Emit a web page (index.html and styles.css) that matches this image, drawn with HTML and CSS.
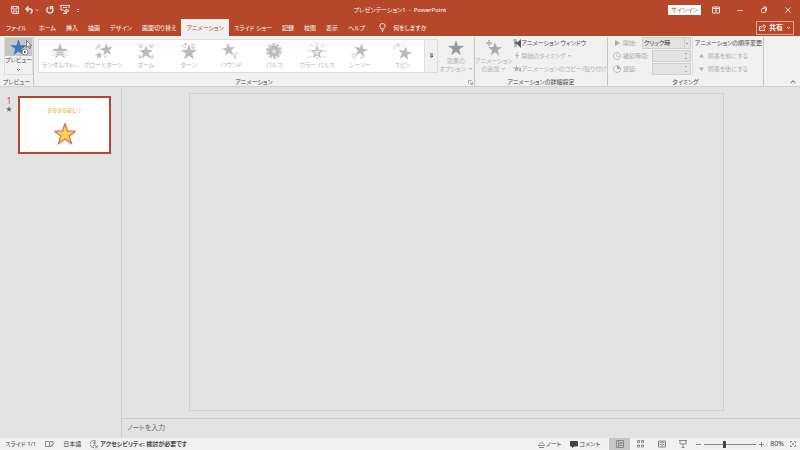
FILE: index.html
```html
<!DOCTYPE html>
<html lang="ja">
<head>
    <meta charset="UTF-8">
    <meta name="viewport" content="width=device-width, initial-scale=1.0">
    <title>プレゼンテーション1 - PowerPoint</title>
    <link rel="stylesheet" href="styles.css">
</head>
<body>
    <!-- Shared shapes -->
    <svg class="defs" aria-hidden="true">
        <symbol id="star" viewBox="0 0 16 16">
            <path d="M8 .1l1.900 5.700 6.100.1-4.900 3.600 1.800 5.800L8 11.800l-4.900 3.500 1.800-5.800L0 5.900l6.100-.1z"/>
        </symbol>
        <symbol id="chev" viewBox="0 0 5 4">
            <path d="M1 1l1.500 1.500L4 1"/>
        </symbol>
    </svg>

    <header class="top">
        <div class="title-bar">
            <div class="quick">
                <button aria-label="上書き保存"><svg width="8" height="8" viewBox="0 0 8 8"><path d="M.5.500h7v7h-6l-1-1zM2 .500v2.500h4V.500M2.200 7.500V5h3.600v2.500"/></svg></button>
                <button aria-label="元に戻す"><svg width="15" height="8" viewBox="0 0 15 8"><path class="thick" d="M3.500.500L1 3l2.500 2.500M1 3h4c2.500 0 3 3 .500 4.500"/><path d="M11 3.500l1.200 1.200 1.200-1.200"/></svg></button>
                <button aria-label="繰り返し"><svg width="8" height="8" viewBox="0 0 8 8"><path class="thick" d="M2.300 1.500a3 3 0 1 0 3.500.200M4.500 3.200V.800h2.800"/></svg></button>
                <button aria-label="スライドショー"><svg width="10" height="9" viewBox="0 0 10 9"><path d="M0 .500h10M1 .500v4.500h3M9 .500v2.500M3 2.500h4M5 5v3.500M3 8.500h4M6 4l3 1.800-3 1.700z"/></svg></button>
                <button aria-label="カスタマイズ"><svg width="4" height="6" viewBox="0 0 4 6"><path d="M1 2.500h2M1.500 4.500h1"/></svg></button>
            </div>
            <h1 class="doc-name">プレゼンテーション1&nbsp; -&nbsp; PowerPoint</h1>
            <div class="window-tools">
                <button class="sign-in">サインイン</button>
                <button aria-label="リボンの表示オプション"><svg width="8" height="8" viewBox="0 0 8 8"><path d="M.5 1h7v6h-7zM.5 2.500h7M4 6V3.500M2.800 4.700L4 3.500l1.200 1.200"/></svg></button>
                <button aria-label="最小化"><svg width="8" height="8" viewBox="0 0 8 8"><path d="M1.500 4.500h5"/></svg></button>
                <button aria-label="元に戻す(縮小)"><svg width="8" height="8" viewBox="0 0 8 8"><rect x="1.500" y="2.500" width="4" height="4" rx="1"/><path d="M3 1h2.500c.7 0 1 .3 1 1v3"/></svg></button>
                <button aria-label="閉じる"><svg width="8" height="8" viewBox="0 0 8 8"><path d="M1.500 1.500l5 5M6.500 1.500l-5 5"/></svg></button>
            </div>
        </div>
        <nav class="tabs">
            <a href="#" class="file">ファイル</a>
            <a href="#">ホーム</a>
            <a href="#">挿入</a>
            <a href="#">描画</a>
            <a href="#">デザイン</a>
            <a href="#">画面切り替え</a>
            <a href="#" class="active">アニメーション</a>
            <a href="#">スライド ショー</a>
            <a href="#">記録</a>
            <a href="#">校閲</a>
            <a href="#">表示</a>
            <a href="#">ヘルプ</a>
            <a href="#" class="tell-me"><svg width="7" height="9" viewBox="0 0 7 9"><path d="M2.300 6C2.300 4.800.800 4.500.800 3a2.700 2.500 0 0 1 5.400 0c0 1.500-1.500 1.800-1.500 3zM2.500 7.300h2M3 8.500h1"/></svg>何をしますか</a>
            <button class="share"><svg width="7" height="7" viewBox="0 0 7 7"><path d="M2 2.500H.5v4h5V5M2 4.500c0-2 1.500-2.500 3-2.500V.700L6.700 2.700 5 4.500V3.300"/></svg>共有<svg width="5" height="4"><use href="#chev"/></svg></button>
        </nav>
    </header>

    <section class="ribbon">
        <div class="group preview-group">
            <div class="group-body">
                <button class="preview">
                    <span class="preview-icon">
                        <svg width="22" height="18" viewBox="0 0 22 18"><use href="#star" width="17" height="17" x="2" y="1" fill="#3f7ab8"/><circle cx="17" cy="14" r="3" fill="#fff" stroke="#888"/><path d="M16 12.500l2.500 1.500-2.500 1.500z" fill="#555"/></svg>
                    </span>
                    プレビュー
                    <svg class="chev" width="5" height="4"><use href="#chev"/></svg>
                </button>
            </div>
            <h2>プレビュー</h2>
        </div>

        <div class="group animation-group">
            <div class="group-body">
                <div class="gallery">
                    <button disabled><svg width="22" height="17" viewBox="0 0 22 17"><use href="#star" x="3" width="16" height="16"/><path class="cut" d="M3 8.500h16M3 10.500h16M3 12.500h16"/></svg>ランダムスト…</button>
                    <button disabled><svg width="22" height="17" viewBox="0 0 22 17"><use href="#star" x="8" width="13" height="13" transform="rotate(-8 14 6)"/><use href="#star" x="3" y="8" width="8" height="8"/><path class="line" d="M4 7c0-3 1.500-4 4-4M6 1l2.300 2L6 5M12 14c2 0 3-.5 3-2"/></svg>グローとターン</button>
                    <button disabled><svg width="22" height="17" viewBox="0 0 22 17"><use href="#star" x="4" y="2" width="14" height="14"/><path class="line" d="M3 1l4 3M7 1v3H4M19 1l-4 3M15 1v3h3M3 16l3-3M3 13h3v3M19 16l-3-3M19 13h-3v3"/></svg>ズーム</button>
                    <button disabled><svg width="22" height="17" viewBox="0 0 22 17"><use href="#star" x="3" y="1" width="16" height="16"/><path class="line" d="M8 5c-4 0-4-4 1-4M14 5c4 0 4-4-1-4M14 2v3h3M7 0l2 1-2 2"/></svg>ターン</button>
                    <button disabled><svg width="22" height="17" viewBox="0 0 22 17"><use href="#star" x="2" width="13" height="13" transform="rotate(-8 8 6)"/><path class="line" d="M11 12c3-2 4 0 4 4M15 15c0-4 1-5 3-6"/></svg>バウンド</button>
                    <button disabled><svg width="22" height="17" viewBox="0 0 22 17"><circle cx="11" cy="8" r="6.500" fill="none" stroke="#ccc" stroke-width="3" stroke-dasharray="3 1"/><circle cx="11" cy="8" r="5.500" fill="#bbb"/><use href="#star" x="8" y="5" width="6" height="6" fill="#e6e6e6"/></svg>パルス</button>
                    <button disabled><svg width="22" height="17" viewBox="0 0 22 17"><use href="#star" x="4" y="2" width="14" height="14"/><use href="#star" x="7" y="5" width="8" height="8" fill="#efe0e0"/><path class="line" d="M11 0v2M4 1l3 3M18 1l-3 3M2 8h2M18 8h2M3 15l2-2M19 15l-2-2M11 14v2"/></svg>カラー パルス</button>
                    <button disabled><svg width="22" height="17" viewBox="0 0 22 17"><use href="#star" x="5" width="14" height="14" transform="rotate(12 12 7)"/><path class="line" d="M3 11c0 2 1 4 4 4M5 10c0 2 1 3 3 3M11 15c3 0 4-1 5-3"/></svg>シーソー</button>
                    <button disabled><svg width="22" height="17" viewBox="0 0 22 17"><use href="#star" x="6" y="3" width="14" height="14" transform="rotate(12 13 10)"/><path class="line" d="M2 7c0-4 2-5 5-5M5 0l2.500 2L5 4M10 2l2 1"/></svg>スピン</button>
                    <button class="more" aria-label="その他"><svg width="5" height="6" viewBox="0 0 5 6"><path d="M1 1h3M1 3l1.500 1.500L4 3z"/></svg></button>
                </div>
                <button class="big" disabled><svg width="18" height="18" viewBox="0 0 18 18"><use href="#star" x="1" y="1" width="16" height="16" fill="#999"/></svg>効果の<span>オプション<svg width="5" height="4"><use href="#chev"/></svg></span></button>
            </div>
            <h2>アニメーション</h2>
            <button class="launcher" aria-label="アニメーションの詳細"><svg width="5" height="5" viewBox="0 0 5 5"><path d="M.5 4V.500H4M2 2l2.500 2.500M4.500 2v2.500H2"/></svg></button>
        </div>

        <div class="group advanced-group">
            <div class="group-body">
                <button class="big" disabled><svg width="18" height="18" viewBox="0 0 18 18"><use href="#star" x="3" y="3" width="14" height="14" fill="#aaa"/><path d="M4 1v6M1 4h6" stroke="#f1f1f1" stroke-width="4"/><path d="M4 1v6M1 4h6" stroke="#bbb" stroke-width="2"/></svg>アニメーション<span>の追加 <svg width="5" height="4"><use href="#chev"/></svg></span></button>
                <div class="stack">
                    <button><svg width="9" height="9" viewBox="0 0 9 9"><path d="M4 4l4-4v9L4.500 5.500z" fill="#555"/><path d="M0 1h4M1 3h3M1 7h3" stroke="#888"/><circle cx="3" cy="4" r="1.800" fill="#3f7ab8"/></svg>アニメーション ウィンドウ</button>
                    <button disabled><svg width="9" height="9" viewBox="0 0 9 9"><path d="M5 0L2 5h2L2.500 9 6 4H4z"/></svg>開始のタイミング<svg class="arrow" width="7" height="4"><use href="#chev"/></svg></button>
                    <button disabled><svg width="9" height="9" viewBox="0 0 9 9"><use href="#star" x="0" y="1" width="7" height="7"/><path d="M6 5l2-2v5l-2-1z"/></svg>アニメーションのコピー/貼り付け</button>
                </div>
            </div>
            <h2>アニメーションの詳細設定</h2>
        </div>

        <div class="group timing-group">
            <div class="group-body">
                <div class="timing">
                    <div class="field">
                        <svg width="8" height="8" viewBox="0 0 8 8"><path d="M2 1l5 3-5 3z" fill="#aaa"/></svg>
                        <label for="start">開始:</label>
                        <select id="start" disabled><option>クリック時</option></select>
                    </div>
                    <div class="field">
                        <svg width="8" height="8" viewBox="0 0 8 8"><path d="M4 .500a3.500 3.500 0 1 0 .1 0M4 2v2.500h2" fill="none" stroke="#bbb"/></svg>
                        <label for="duration">継続時間:</label>
                        <input id="duration" type="text" disabled>
                    </div>
                    <div class="field">
                        <svg width="8" height="8" viewBox="0 0 8 8"><path d="M4 .500a3.500 3.500 0 1 0 .1 0" fill="none" stroke="#bbb"/><path d="M4 1v3h3A3 3 0 0 0 4 1" fill="#aaa"/></svg>
                        <label for="delay">遅延:</label>
                        <input id="delay" type="text" disabled>
                    </div>
                </div>
                <div class="stack reorder">
                    <h3>アニメーションの順序変更</h3>
                    <button disabled><svg width="5" height="4" viewBox="0 0 5 4"><path d="M0 3.500L2.500 0 5 3.500z"/></svg>順番を前にする</button>
                    <button disabled><svg width="5" height="4" viewBox="0 0 5 4"><path d="M0 .500L2.500 4 5 .500z"/></svg>順番を後にする</button>
                </div>
            </div>
            <h2>タイミング</h2>
        </div>
        <button class="collapse" aria-label="リボンを折りたたむ"><svg width="6" height="4" viewBox="0 0 6 4"><path d="M.5 3L3 .700 5.500 3"/></svg></button>
    </section>

    <main class="workspace">
        <aside class="slides">
            <div class="slide-no">1<svg width="6" height="6"><use href="#star" width="6" height="6"/></svg></div>
            <a href="#" class="thumb">
                <span>きらきらぼし？</span>
                <svg width="24" height="24" viewBox="-1 -1 18 18"><use href="#star" width="16" height="16" overflow="visible" fill="#ffd45a" stroke="#dc7252"/></svg>
            </a>
        </aside>
        <div class="editor">
            <div class="canvas"></div>
            <div class="notes">ノートを入力</div>
        </div>
    </main>

    <footer class="status">
        <span>スライド 1/1</span>
        <button aria-label="スペルチェック"><svg width="9" height="8" viewBox="0 0 9 8"><path d="M4 1.500H.5v5H4l.5.500V2L4 1.500M4.500 2l.5-.5h3V3M5 6.500h1M6 5l1 1.500L8.500 3"/></svg></button>
        <button>日本語</button>
        <button class="access"><svg width="9" height="9" viewBox="0 0 9 9"><path d="M6 1.500A3.500 3.500 0 1 0 4 7.500M3 3h3M4.500 1.500v3L3 6.500M5 5l3 3.500M8 5L5 8.500"/></svg>アクセシビリティ: 検討が必要です</button>
        <div class="status-right">
            <button><svg width="7" height="7" viewBox="0 0 7 7"><path d="M1 3.500L3.500 1 6 3.500M0 4.500h7M1 6.500h5"/></svg>ノート</button>
            <button><svg width="8" height="7" viewBox="0 0 8 7"><path class="solid" d="M.5.500h7v4.500H4L2.500 6.500V5h-2z"/></svg>コメント</button>
            <div class="views">
                <button class="active" aria-label="標準"><svg width="8" height="8" viewBox="0 0 8 8"><path d="M.5.500h7v7h-7zM2.500.500v7M2.500 5.500h5M4 2.500h2v1H4z"/></svg></button>
                <button aria-label="スライド一覧"><svg width="8" height="8" viewBox="0 0 8 8"><path d="M.5 .500h2v2h-2zM4.500 .500h2v2h-2zM.5 5h2v2h-2zM4.500 5h2v2h-2z"/></svg></button>
                <button aria-label="閲覧表示"><svg width="8" height="8" viewBox="0 0 8 8"><path d="M.5 1H4v6H.5zM4 1h3.500v6H4M1.500 2.500h1.500M1.500 4.500h1.500M5 2.500h1.500M5 4.500h1.500"/></svg></button>
                <button aria-label="スライドショー"><svg width="8" height="8" viewBox="0 0 8 8"><path d="M0 .500h8M1 .500V4h6V.500M4 4v3.500M2.500 7.500h3"/></svg></button>
            </div>
            <div class="zoom">
                <button aria-label="縮小"><svg width="5" height="5" viewBox="0 0 5 5"><path d="M0 2.500h5"/></svg></button>
                <input type="range" min="10" max="190" value="80" aria-label="ズーム">
                <button aria-label="拡大"><svg width="5" height="5" viewBox="0 0 5 5"><path d="M0 2.500h5M2.500 0v5"/></svg></button>
                <button class="percent">80%</button>
                <button aria-label="ウィンドウに合わせる"><svg width="6" height="6" viewBox="0 0 6 6"><path d="M.5 2V.500H2M4 .500h1.500V2M5.500 4v1.500H4M2 5.500H.5V4M2 3h2M3 2v2"/></svg></button>
            </div>
        </div>
    </footer>
    <svg class="pointer" width="6" height="9" viewBox="0 0 6 9" aria-hidden="true"><path d="M.5.500v7l1.700-1.500L3.500 8.500l1-.5-1-2.400h2z"/></svg>
</body>
</html>
```
FILE: styles.css
```css
* {
    box-sizing: border-box;
}
body {
    --red: #b7472a;
    --ink: #444;
    --dim: #b1afaf;
    margin: 0;
    height: 100vh;
    display: flex;
    flex-direction: column;
    overflow: hidden;
    font-family: "Noto Sans", "Noto Sans CJK JP", sans-serif;
    font-feature-settings: "palt";
    font-size: 6px;
    line-height: 8px;
    color: var(--ink);
    background-color: #e3e3e3;
}
button {
    display: flex;
    align-items: center;
    padding: 0;
    border: none;
    background: none;
    font: inherit;
    font-feature-settings: inherit;
    color: inherit;
    white-space: nowrap;
}
button:disabled {
    color: var(--dim);
}
a {
    color: inherit;
    text-decoration: none;
}
h1, h2, h3 {
    margin: 0;
    font-size: inherit;
    font-weight: normal;
    white-space: nowrap;
}
svg {
    flex: none;
    fill: none;
}
.defs {
    position: absolute;
    width: 0;
    height: 0;
}

/* Title bar and tabs */
.top {
    background-color: var(--red);
    color: #fff;
}
.top svg {
    stroke: #f6e4df;
    stroke-width: 1;
}
.top .thick {
    stroke-width: 1.500;
}
.title-bar {
    display: grid;
    grid-template-columns: 1fr auto 1fr;
    align-items: center;
    height: 19px;
}
.quick {
    display: flex;
    align-items: center;
    gap: 6px;
    padding-left: 11px;
}
.window-tools {
    display: flex;
    align-items: center;
    justify-content: flex-end;
}
.window-tools button {
    justify-content: center;
    width: 24px;
}
.window-tools .sign-in {
    width: auto;
    margin-right: 3px;
    padding: 1px 3px;
    background-color: #fff;
    color: var(--red);
}
.tabs {
    display: flex;
    align-items: stretch;
    height: 17px;
    padding-right: 6px;
}
.tabs a {
    display: flex;
    align-items: center;
    padding: 0 5px;
    white-space: nowrap;
}
.tabs .file {
    padding: 0 7px 0 6px;
}
.tabs .active {
    background-color: #f1f1f1;
    color: var(--red);
}
.tabs .tell-me {
    gap: 7px;
    margin-left: 4px;
}
.share {
    align-self: center;
    gap: 3px;
    margin-left: auto;
    padding: 2px 2px;
    border: 1px solid #dba395;
    font-size: 7px;
    font-weight: bold;
}

/* Ribbon */
.ribbon {
    display: flex;
    height: 51px;
    padding: 1px 4px 0 0;
    background-color: #f1f1f1;
    border-bottom: 1px solid #d2d0ce;
}
.group {
    position: relative;
    display: flex;
    flex-direction: column;
    justify-content: space-between;
    border-right: 1px solid #c6c6c6;
}
.group-body {
    display: flex;
    height: 38px;
}
.group h2 {
    text-align: center;
}
.preview-group {
    width: 34px;
}
.animation-group {
    flex: 1;
}
.advanced-group {
    width: 133px;
}
.timing-group {
    width: 156px;
}
.preview {
    flex: 1;
    flex-direction: column;
    margin: 0 4px 0 4px;
    border: 1px solid #ddd;
}
.preview-icon {
    display: flex;
    justify-content: center;
    align-self: stretch;
    background-color: #c6c6c6;
}
.chev {
    margin-top: 4px;
    stroke: #666;
}
.gallery {
    flex: 1;
    display: grid;
    grid-template-columns: repeat(9, 1fr) 13px;
    margin: 2px 0 2px 4px;
    background-color: #fff;
    border: 1px solid #ddd;
}
.gallery button {
    flex-direction: column;
    justify-content: center;
    gap: 1px;
}
.gallery svg {
    fill: #b9b9b9;
}
.gallery .line {
    fill: none;
    stroke: #c4c4c4;
}
.gallery .cut {
    stroke: #e2e2e2;
    stroke-width: 1;
}
.gallery .more {
    background-color: #f1f1f1;
    border-left: 1px solid #ddd;
}
.more svg {
    fill: none;
    stroke: #555;
}
.big {
    flex-direction: column;
    width: 36px;
    padding-top: 2px;
    text-align: center;
}
.big span {
    display: flex;
    align-items: center;
    gap: 2px;
}
.big span svg, .stack .arrow {
    stroke: #aaa;
}
.launcher {
    position: absolute;
    right: 1px;
    bottom: 1px;
}
.launcher svg {
    stroke: #aaa;
}
.advanced-group .big {
    width: 38px;
}
.stack {
    display: grid;
    grid-template-rows: repeat(3, 1fr);
    align-items: center;
}
.stack button:disabled svg {
    fill: var(--dim);
}
.stack button:disabled .arrow {
    fill: none;
}
.timing {
    flex: 1;
    display: grid;
    grid-template-rows: repeat(3, 1fr);
    padding: 0 1px 0 5px;
    border-right: 1px solid #ddd;
}
.field {
    display: flex;
    align-items: center;
    gap: 2px;
    color: #aaa;
    white-space: nowrap;
}
.field select, .field input {
    height: 12px;
    margin-left: auto;
    padding: 0 0 0 1px;
    border: 1px solid #d0d0d0;
    border-radius: 0;
    background-color: #e3e3e3;
    color: #333;
    font: inherit;
    font-feature-settings: inherit;
    opacity: 1;
}
.field select {
    width: 49px;
    appearance: none;
    background-image: linear-gradient(#999, #999), linear-gradient(#d0d0d0, #d0d0d0);
    background-size: 2px 1px, 1px 100%;
    background-position: right 2px center, right 5px center;
    background-repeat: no-repeat;
}
.field input {
    width: 39px;
    background-image: linear-gradient(#aaa, #aaa), linear-gradient(#aaa, #aaa);
    background-size: 2px 1px;
    background-position: right 3px top 2px, right 3px bottom 2px;
    background-repeat: no-repeat;
}
.reorder {
    padding: 0 1px 0 2px;
}
.reorder button {
    gap: 4px;
    padding-left: 4px;
}
.collapse {
    align-self: flex-end;
    justify-content: flex-end;
    width: 32px;
    padding-bottom: 2px;
}
.collapse svg {
    stroke: #555;
}

/* Slide list and editor */
.workspace {
    flex: 1;
    display: flex;
    min-height: 0;
}
.slides {
    display: flex;
    align-items: flex-start;
    gap: 6px;
    width: 122px;
    padding: 9px 10px 0 6px;
    border-right: 1px solid #d0d0d0;
}
.slide-no {
    display: flex;
    flex-direction: column;
    align-items: center;
    width: 6px;
    font-size: 8px;
    line-height: 10px;
    color: var(--red);
}
.slide-no svg {
    fill: #666;
}
.thumb {
    flex: 1;
    display: flex;
    flex-direction: column;
    align-items: center;
    gap: 8px;
    aspect-ratio: 93 / 58;
    padding-top: 8px;
    border: 2px solid var(--red);
    background-color: #fff;
    font-size: 5px;
    font-weight: bold;
    color: #f0b93a;
    font-feature-settings: normal;
}
.editor {
    flex: 1;
    display: flex;
    flex-direction: column;
}
.canvas {
    flex: 1;
    margin: 6px 76px 7px 67px;
    border: 1px solid #d0d0d0;
}
.notes {
    height: 20px;
    padding: 5px;
    border-top: 1px solid #cacaca;
    font-size: 7px;
    color: #666;
}

/* Status bar */
.status {
    display: flex;
    align-items: center;
    gap: 9px;
    height: 12px;
    padding: 0 4px 0 5px;
    background-color: #f1f1f1;
    white-space: nowrap;
}
.status svg {
    stroke: #888;
}
.access {
    gap: 1px;
    font-weight: bold;
}
.status-right {
    display: flex;
    align-items: center;
    gap: 9px;
    margin-left: auto;
}
.status-right button {
    gap: 1px;
}
.status .solid {
    fill: #444;
    stroke: #444;
}
.views {
    display: flex;
}
.views button {
    justify-content: center;
    width: 21px;
    height: 12px;
}
.views .active {
    background-color: #c6c6c6;
}
.zoom {
    display: flex;
    align-items: center;
    gap: 3px;
    margin-left: -6px;
}
.zoom input {
    width: 52px;
    height: 8px;
    margin: 0;
    appearance: none;
    background: linear-gradient(#888, #888) center / 100% 1px no-repeat;
}
.zoom input::-webkit-slider-thumb {
    appearance: none;
    width: 3px;
    height: 7px;
    background-color: #444;
}
.zoom .percent {
    margin: 0 3px;
    font-size: 7px;
}

.pointer {
    position: absolute;
    left: 26px;
    top: 40px;
    fill: #fff;
    stroke: #777;
}
```
